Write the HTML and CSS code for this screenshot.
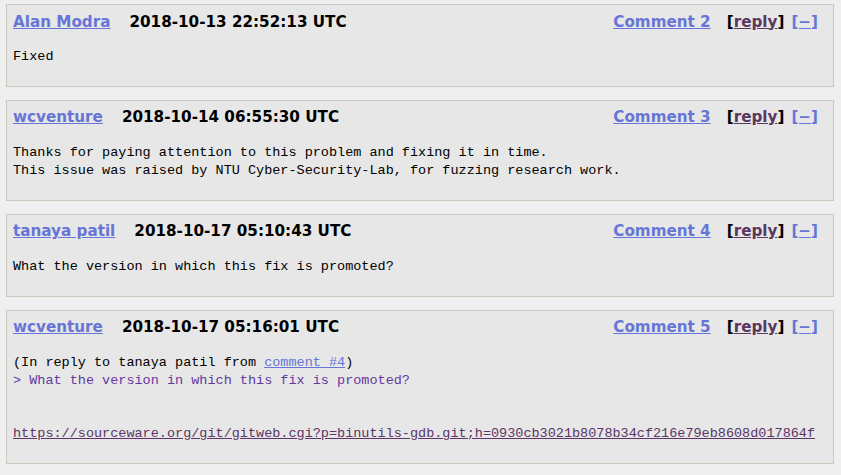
FILE: index.html
```html
<!DOCTYPE html>
<html>
<head>
<meta charset="utf-8">
<link rel="stylesheet" href="styles.css">
</head>
<body>
<div class="comments">
  <div class="comment">
    <div class="head">
      <a class="author" href="#">Alan Modra</a>
      <span class="time">2018-10-13 22:52:13 UTC</span>
      <span class="actions">
        <a class="num" href="#">Comment 2</a>
        <span class="reply">[<a href="#">reply</a>]</span>
        <a class="collapse" href="#">[−]</a>
      </span>
    </div>
    <pre class="text">Fixed</pre>
  </div>
  <div class="comment">
    <div class="head">
      <a class="author" href="#">wcventure</a>
      <span class="time">2018-10-14 06:55:30 UTC</span>
      <span class="actions">
        <a class="num" href="#">Comment 3</a>
        <span class="reply">[<a href="#">reply</a>]</span>
        <a class="collapse" href="#">[−]</a>
      </span>
    </div>
    <pre class="text">Thanks for paying attention to this problem and fixing it in time.
This issue was raised by NTU Cyber-Security-Lab, for fuzzing research work.</pre>
  </div>
  <div class="comment">
    <div class="head">
      <a class="author" href="#">tanaya patil</a>
      <span class="time">2018-10-17 05:10:43 UTC</span>
      <span class="actions">
        <a class="num" href="#">Comment 4</a>
        <span class="reply">[<a href="#">reply</a>]</span>
        <a class="collapse" href="#">[−]</a>
      </span>
    </div>
    <pre class="text">What the version in which this fix is promoted?</pre>
  </div>
  <div class="comment">
    <div class="head">
      <a class="author" href="#">wcventure</a>
      <span class="time">2018-10-17 05:16:01 UTC</span>
      <span class="actions">
        <a class="num" href="#">Comment 5</a>
        <span class="reply">[<a href="#">reply</a>]</span>
        <a class="collapse" href="#">[−]</a>
      </span>
    </div>
    <pre class="text">(In reply to tanaya patil from <a class="ref" href="#">comment #4</a>)
<span class="quote">&gt; What the version in which this fix is promoted?</span>


<a class="url" href="#">https://sourceware.org/git/gitweb.cgi?p=binutils-gdb.git;h=0930cb3021b8078b34cf216e79eb8608d017864f</a></pre>
  </div>
</div>
</body>
</html>
```
FILE: styles.css
```css
html, body {
  margin: 0;
  padding: 0;
  background: #efefef;
}
body {
  font-family: "DejaVu Sans", Verdana, sans-serif;
  color: #000;
}
.comments {
  display: flex;
  flex-direction: column;
  gap: 13px;
  padding: 4px 0 0 6px;
  width: 828px;
}
.comment {
  background: #e7e7e7;
  border: 1px solid #c9c9bb;
  padding: 0 15px 0 6px;
}
.head {
  display: flex;
  align-items: center;
  height: 33px;
  font-size: 15.2px;
  font-weight: bold;
}
.head a {
  color: #6675d6;
}
.author {
  margin-right: 19px;
}
.actions {
  margin-left: auto;
  display: flex;
  align-items: center;
}
.num {
  margin-right: 16px;
}
.reply {
  margin-right: 7px;
  color: #000;
}
.head .reply a {
  color: #5a3860;
}
.text {
  margin: 10px 0 20.2px 0;
  font-family: "Liberation Mono", "DejaVu Sans Mono", monospace;
  font-size: 13.5px;
  line-height: 17.8px;
  color: #000;
  white-space: pre;
}
.ref {
  color: #6675d6;
}
.quote {
  color: #6538a0;
}
.url {
  color: #5c3566;
}
```
